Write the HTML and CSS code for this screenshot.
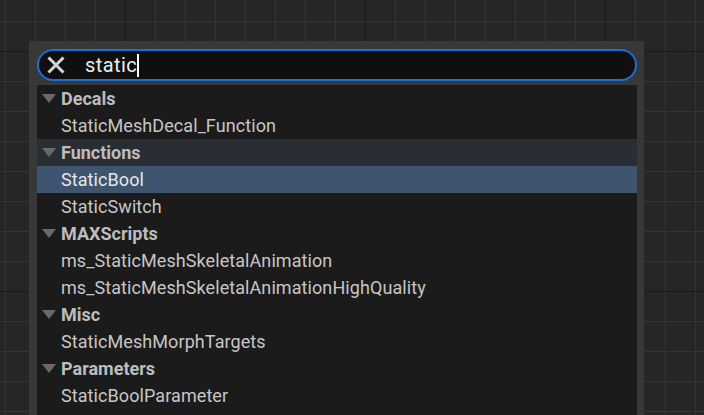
FILE: index.html
```html
<!DOCTYPE html>
<html>
<head>
<meta charset="utf-8">
<link rel="stylesheet" href="styles.css">
</head>
<body>
<div class="panel">
  <div class="search">
    <svg class="clear" width="20" height="20" viewBox="0 0 20 20"><path d="M2.5 2.5 L17.5 17.5 M17.5 2.5 L2.5 17.5" stroke="#d4d4d4" stroke-width="3" stroke-linecap="butt" fill="none"/></svg>
    <span class="query">static</span><span class="caret"></span>
  </div>
  <div class="list">
    <div class="row head"><span class="tri"></span>Decals</div>
    <div class="row item">StaticMeshDecal_Function</div>
    <div class="row head alt"><span class="tri"></span>Functions</div>
    <div class="row item sel">StaticBool</div>
    <div class="row item">StaticSwitch</div>
    <div class="row head"><span class="tri"></span>MAXScripts</div>
    <div class="row item">ms_StaticMeshSkeletalAnimation</div>
    <div class="row item">ms_StaticMeshSkeletalAnimationHighQuality</div>
    <div class="row head"><span class="tri"></span>Misc</div>
    <div class="row item">StaticMeshMorphTargets</div>
    <div class="row head"><span class="tri"></span>Parameters</div>
    <div class="row item">StaticBoolParameter</div>
  </div>
</div>
</body>
</html>
```
FILE: styles.css
```css
html, body {
  margin: 0;
  padding: 0;
  height: 100%;
  overflow: hidden;
}
body {
  background-color: #262626;
  background-image:
    linear-gradient(to right, #1a1a1a 1px, transparent 1px),
    linear-gradient(to bottom, #1a1a1a 1px, transparent 1px),
    linear-gradient(to right, #343434 1px, transparent 1px),
    linear-gradient(to bottom, #343434 1px, transparent 1px);
  background-size: 240px 240px, 240px 240px, 30px 30px, 30px 30px;
  background-position: 125px 0, 0 51px, 5px 0, 0 21px;
  font-family: Roboto, "Noto Sans", sans-serif;
}
.panel {
  margin: 41px 0 0 29px;
  width: 600px;
  height: 374px;
  padding: 8px 7px 0 8px;
  background: #383838;
  display: flex;
  flex-direction: column;
  gap: 4px;
}
.search {
  height: 28px;
  border: 2px solid #1b6fd4;
  border-radius: 16px;
  background: #0f0f0f;
  display: flex;
  align-items: center;
  padding-left: 7px;
}
.clear {
  flex: none;
}
.query {
  margin-left: 19px;
  font-size: 20px;
  color: #ececec;
  letter-spacing: 0.4px;
}
.caret {
  width: 2px;
  height: 23px;
  background: #ffffff;
  margin-left: 0;
}
.list {
  flex: 1;
  background: #1b1b1b;
}
.row {
  height: 27px;
  display: flex;
  align-items: center;
  font-size: 18px;
  color: #c6c6c6;
  padding-left: 24px;
  letter-spacing: 0.08px;
}
.head {
  font-weight: bold;
  color: #bdbdbd;
  padding-left: 5px;
  letter-spacing: 0;
}
.alt {
  background: #292e35;
}
.sel {
  background: #3e546f;
  color: #e6e6e6;
}
.tri {
  width: 0;
  height: 0;
  border-left: 7px solid transparent;
  border-right: 7px solid transparent;
  border-top: 9px solid #6a6a6a;
  margin-right: 5px;
}
```
